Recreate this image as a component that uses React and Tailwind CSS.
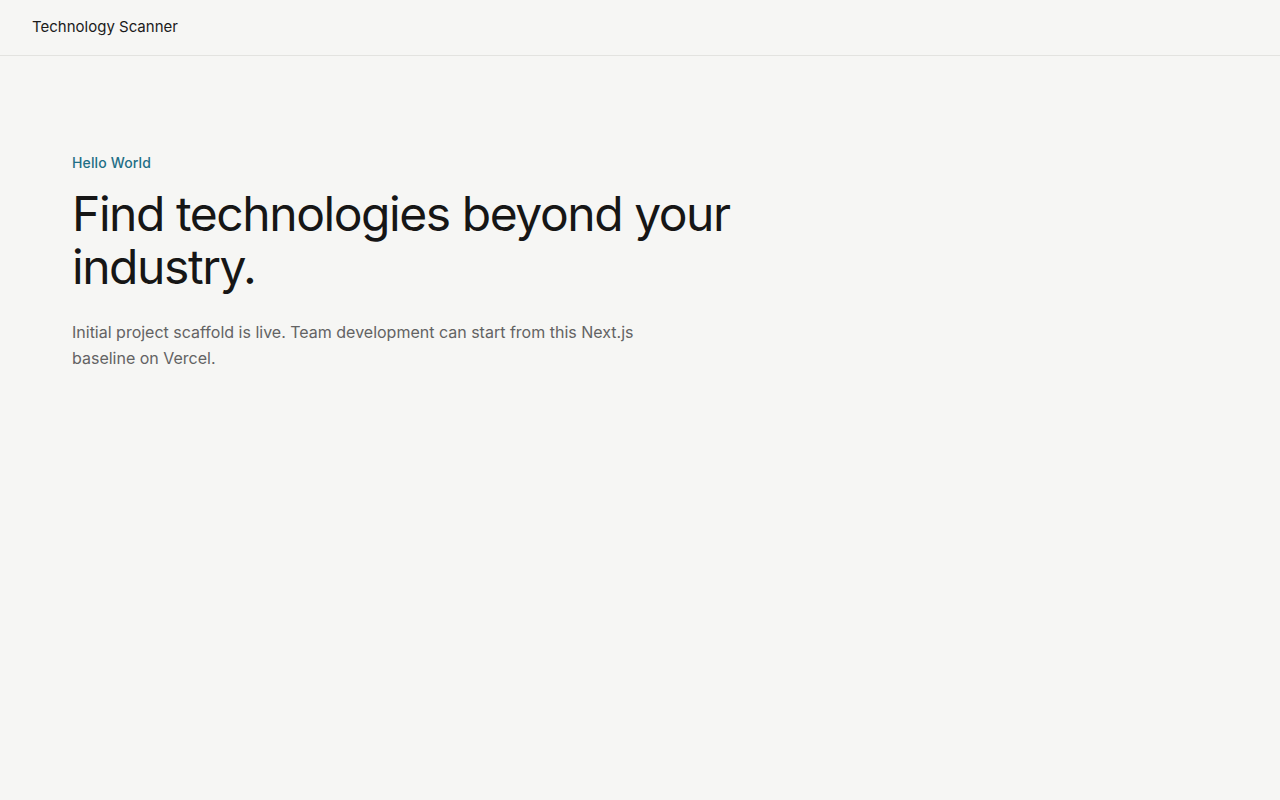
export default function App() {
  return (
    <div className="min-h-screen bg-[#f6f6f4] text-[#161616]" style={{ fontFamily: 'Inter, "Noto Sans", sans-serif' }}>
      <header className="h-14 flex items-center px-8 border-b border-[#e3e3e0]">
        <span className="text-[15px] font-normal text-[#1b1b1b]">Technology Scanner</span>
      </header>

      <main className="px-[72px] pt-[97px]">
        <p className="text-sm font-medium leading-5 tracking-[0.01em] text-[#1f6f86]">Hello World</p>
        <h1 className="mt-[14px] max-w-[720px] text-[48px] leading-[53px] tracking-[-0.03em] font-normal text-[#161616]">
          Find technologies beyond your industry.
        </h1>
        <p className="mt-[26px] max-w-[600px] text-base leading-[26px] text-[#636363]">
          Initial project scaffold is live. Team development can start from this Next.js baseline on Vercel.
        </p>
      </main>
    </div>
  );
}
